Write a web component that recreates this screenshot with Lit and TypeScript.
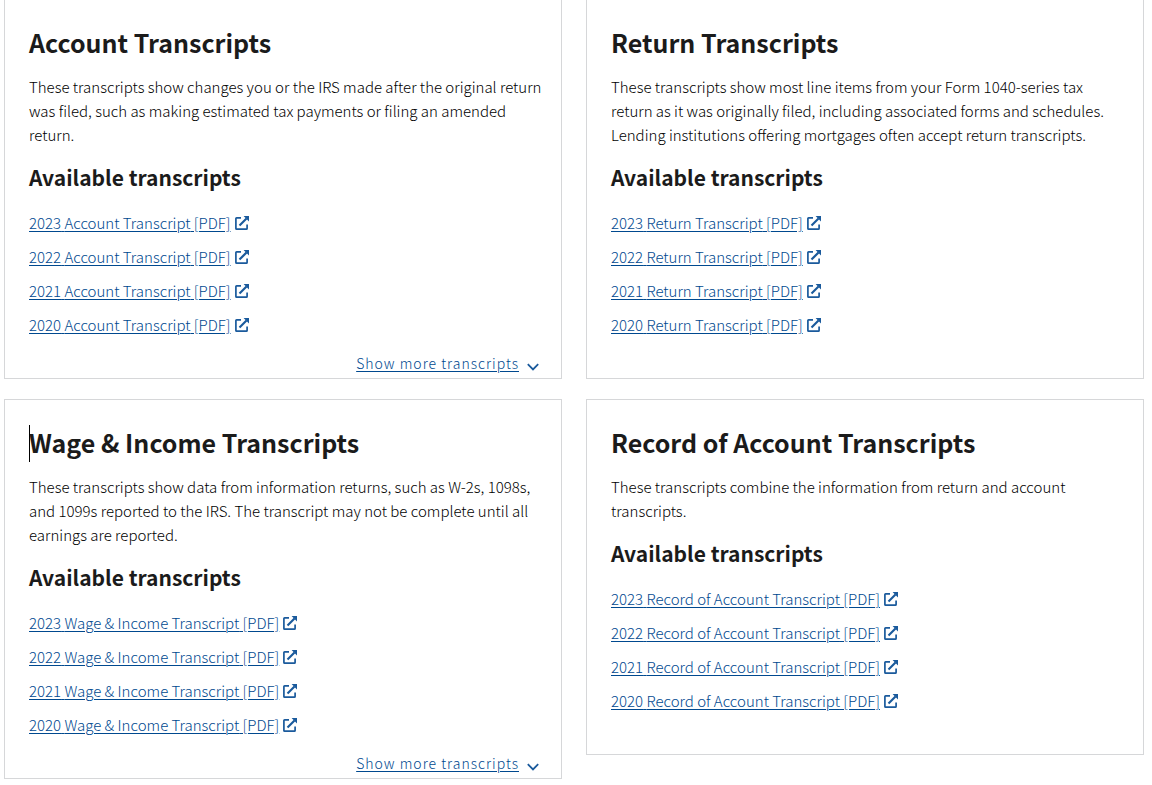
import { LitElement, html, css } from "lit";
import { customElement, property } from "lit/decorators.js";

interface TranscriptGroup {
  heading: string;
  name: string;
  description: string;
  expandable: boolean;
  caret?: boolean;
}

const YEARS = [2023, 2022, 2021, 2020];

const GROUPS: TranscriptGroup[] = [
  {
    heading: "Account Transcripts",
    name: "Account Transcript",
    description:
      "These transcripts show changes you or the IRS made after the original return was filed, such as making estimated tax payments or filing an amended return.",
    expandable: true,
  },
  {
    heading: "Return Transcripts",
    name: "Return Transcript",
    description:
      "These transcripts show most line items from your Form 1040-series tax return as it was originally filed, including associated forms and schedules. Lending institutions offering mortgages often accept return transcripts.",
    expandable: false,
  },
  {
    heading: "Wage & Income Transcripts",
    name: "Wage & Income Transcript",
    description:
      "These transcripts show data from information returns, such as W-2s, 1098s, and 1099s reported to the IRS. The transcript may not be complete until all earnings are reported.",
    expandable: true,
    caret: true,
  },
  {
    heading: "Record of Account Transcripts",
    name: "Record of Account Transcript",
    description:
      "These transcripts combine the information from return and account transcripts.",
    expandable: false,
  },
];

@customElement("transcript-card")
export class TranscriptCard extends LitElement {
  @property({ attribute: false }) group!: TranscriptGroup;

  static styles = css`
    :host {
      display: block;
      box-sizing: border-box;
      border: 1px solid #d6d7d9;
      padding: 22px 16px 0 24px;
      background: #fff;
    }
    .title {
      position: relative;
      margin: 0 0 13px;
      font-size: 25px;
      line-height: 40px;
      font-weight: 700;
    }
    .caret::before {
      content: "";
      position: absolute;
      left: 0;
      top: 3px;
      width: 1px;
      height: 37px;
      background: #000;
    }
    .description {
      margin: 0 0 14px;
      color: #000;
    }
    .subtitle {
      margin: 0 0 18px;
      font-size: 21px;
      line-height: 32px;
      font-weight: 700;
    }
    .list {
      display: flex;
      flex-direction: column;
      align-items: flex-start;
      gap: 10px;
      margin: 0;
      padding: 0;
      list-style: none;
    }
    .link {
      display: flex;
      align-items: center;
      gap: 4px;
      color: #00498f;
      text-decoration: none;
    }
    .label {
      text-decoration: underline;
      text-underline-offset: 2px;
      text-decoration-thickness: 1px;
    }
    .external {
      width: 14px;
      height: 14px;
      fill: none;
      stroke: #1a5a9c;
      stroke-width: 2;
    }
    .footer {
      display: flex;
      justify-content: flex-end;
      align-items: flex-end;
      height: 38px;
      padding: 0 6px 3px 0;
    }
    .more {
      display: flex;
      align-items: center;
      gap: 8px;
      border: 0;
      padding: 0;
      background: none;
      color: #00498f;
      font: inherit;
      font-size: 14px;
      letter-spacing: 1px;
      cursor: pointer;
    }
    .chevron {
      width: 12px;
      height: 8px;
      margin-top: 8px;
      fill: none;
      stroke: #1a5a9c;
      stroke-width: 2;
    }
  `;

  render() {
    const { heading, name, description, expandable, caret } = this.group;
    return html`
      <h2 class="title ${caret ? "caret" : ""}">${heading}</h2>
      <p class="description">${description}</p>
      <h3 class="subtitle">Available transcripts</h3>
      <ul class="list">
        ${YEARS.map(
          (year) => html`<li>
            <a class="link" href="#"
              ><span class="label">${year} ${name} [PDF]</span
              ><svg class="external" viewBox="0 0 14 14" aria-hidden="true">
                <path
                  d="M6 1.8H1.6Q.9 1.8 .9 2.5V12.4Q.9 13.1 1.6 13.1H11.4Q12.1 13.1 12.1 12.4V8.5"
                  stroke-width="1.7"
                />
                <path d="M4.5 9.5L11.5 2.5" stroke-width="2.2" />
                <path
                  d="M8.6 0H14V5.4Z"
                  fill="#1a5a9c"
                  stroke="none"
                /></svg
            ></a>
          </li>`
        )}
      </ul>
      <div class="footer">
        ${expandable
          ? html`<button class="more" type="button">
              <span class="label">Show more transcripts</span>
              <svg class="chevron" viewBox="0 0 12 8" aria-hidden="true">
                <path d="M.8 1.2L6 6.4L11.2 1.2" stroke-width="1.8" />
              </svg>
            </button>`
          : ""}
      </div>
    `;
  }
}

@customElement("app-root")
export class AppRoot extends LitElement {
  static styles = css`
    :host {
      display: block;
      background: #fff;
      color: #1b1b1b;
      font-family: "Noto Sans CJK SC", "Open Sans", sans-serif;
      font-size: 15px;
      font-weight: 300;
      line-height: 24px;
    }
    .grid {
      display: grid;
      grid-template-columns: 1fr 1fr;
      align-items: start;
      gap: 20px 24px;
      padding: 0 8px 6px 4px;
    }
    .first {
      border-top: 0;
    }
  `;

  render() {
    return html`<main class="grid">
      ${GROUPS.map(
        (group, i) => html`<transcript-card
          class=${i < 2 ? "first" : ""}
          .group=${group}
        ></transcript-card>`
      )}
    </main>`;
  }
}
